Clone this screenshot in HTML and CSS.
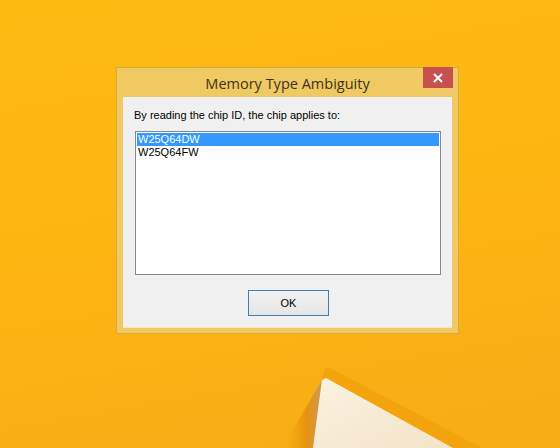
FILE: index.html
```html
<!DOCTYPE html>
<html>
<head>
<meta charset="utf-8">
<link rel="stylesheet" href="styles.css">
</head>
<body>
<div class="desktop">
  <svg class="paper" width="560" height="448" viewBox="0 0 560 448">
    <defs>
      <linearGradient id="sh" x1="0" y1="0" x2="1" y2="0">
        <stop offset="0" stop-color="#f6a912" stop-opacity="0"/>
        <stop offset="0.6" stop-color="#e8920d"/>
        <stop offset="1" stop-color="#c99a5c"/>
      </linearGradient>
      <linearGradient id="wh" x1="0" y1="0" x2="1" y2="1">
        <stop offset="0" stop-color="#fbf2e0"/>
        <stop offset="1" stop-color="#f3e3c8"/>
      </linearGradient>
    </defs>
    <polygon points="322,380 313,448 282,448" fill="url(#sh)"/>
    <polygon points="322,379 325,369 330,368 482,448 453,448" fill="#f3a30c"/>
    <polygon points="322,380 326,378 453,448 313,448" fill="url(#wh)"/>
  </svg>
  <div class="dialog">
    <div class="titlebar">
      <span class="title">Memory Type Ambiguity</span>
      <div class="close">
        <svg width="10" height="10" viewBox="0 0 10 10"><path d="M1 1L9 9M9 1L1 9" stroke="#fff" stroke-width="2"/></svg>
      </div>
    </div>
    <div class="client">
      <p class="prompt">By reading the chip ID, the chip applies to:</p>
      <div class="listbox">
        <div class="item selected">W25Q64DW</div>
        <div class="item">W25Q64FW</div>
      </div>
      <div class="actions">
        <button class="btn">OK</button>
      </div>
    </div>
  </div>
</div>
</body>
</html>
```

FILE: styles.css
```css
html, body {
  margin: 0;
  padding: 0;
}
.desktop {
  position: relative;
  width: 560px;
  height: 448px;
  overflow: hidden;
  background: linear-gradient(170deg, #fdbb12 0%, #fcb512 55%, #f7ab16 100%);
  font-family: "Liberation Sans", Arial, sans-serif;
}
.paper {
  position: absolute;
  left: 0;
  top: 0;
}
.dialog {
  position: absolute;
  left: 116px;
  top: 67px;
  width: 341px;
  height: 265px;
  background: #f1c963;
  border: 1px solid #dba93a;
  display: flex;
  flex-direction: column;
}
.titlebar {
  position: relative;
  height: 29px;
  display: flex;
  align-items: center;
  justify-content: center;
}
.title {
  font-family: "Open Sans", "Noto Sans", sans-serif;
  font-size: 14.5px;
  color: #3b3320;
  margin-top: 1px;
}
.close {
  position: absolute;
  right: 5px;
  top: -1px;
  width: 30px;
  height: 21px;
  background: #c75050;
  display: flex;
  align-items: center;
  justify-content: center;
}
.client {
  margin: 0 6px 0 6px;
  height: 230px;
  background: #f0f0f0;
  border-bottom: 1px solid #fbe6b8;
  padding: 0 11px 0 12px;
  display: flex;
  flex-direction: column;
}
.prompt {
  margin: 12px 0 0 -1px;
  font-size: 11px;
  line-height: 13px;
  color: #000;
}
.listbox {
  margin-top: 9px;
  height: 140px;
  background: #fff;
  border: 1px solid #828790;
  padding: 1px;
}
.item {
  font-size: 11px;
  line-height: 13px;
  height: 13px;
  padding-left: 1px;
  color: #000;
}
.item.selected {
  background: #3399ff;
  color: #fff;
}
.actions {
  display: flex;
  justify-content: flex-start;
  margin-top: 15px;
  padding-left: 113px;
}
.btn {
  width: 81px;
  height: 26px;
  border: 1px solid #3c7fb1;
  background: linear-gradient(#f2f2f2, #e5e5e5);
  font-family: "Liberation Sans", Arial, sans-serif;
  font-size: 11px;
  color: #000;
  padding: 0;
}
```
